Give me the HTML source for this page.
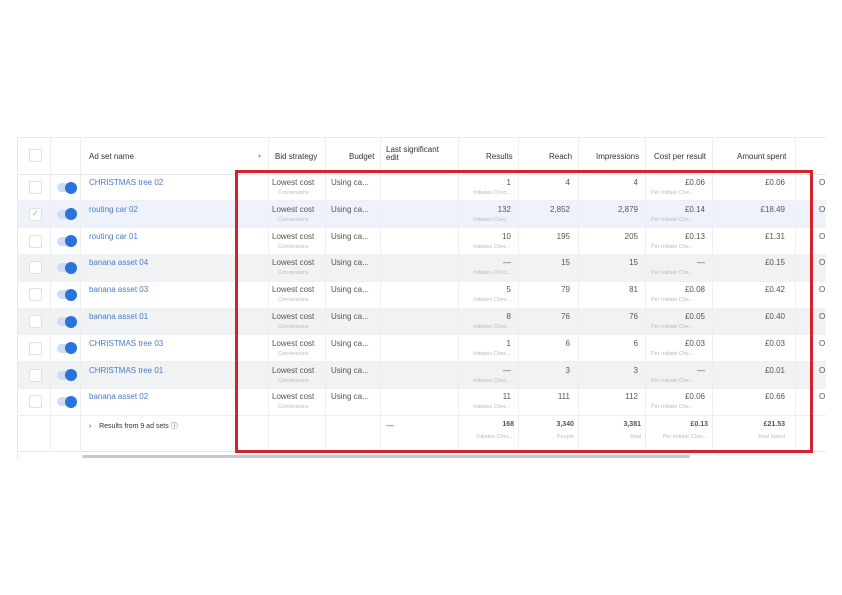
<!DOCTYPE html><html><head><style>
body{margin:0;width:842px;height:595px;background:#fff;position:relative;overflow:hidden;font-family:"Liberation Sans",sans-serif;}
.a{position:absolute;}
.c{position:absolute;font-size:8px;color:#555;white-space:nowrap;}
.s{position:absolute;font-size:5.5px;color:#bbb;white-space:nowrap;}
.r{text-align:right;}
.vl{position:absolute;top:137px;height:313px;width:1px;background:#eceef0;}
.cb{position:absolute;left:29px;width:11px;height:11px;border:1px solid #e0e0e0;border-radius:2px;background:#fff;}
.tg{position:absolute;left:57px;width:18px;height:9px;border-radius:5px;background:#cfdcf2;}
.tg i{position:absolute;right:-2px;top:-1.5px;width:12px;height:12px;border-radius:50%;background:#2a72dc;}
.nm{position:absolute;left:89px;font-size:8px;color:#4a7ac8;}
</style></head><body>
<div class="a" style="left:17px;top:137px;width:809px;height:1px;background:#e6e8eb"></div>
<div class="a" style="left:17px;top:174px;width:809px;height:1px;background:#e6e8eb"></div>
<div class="a" style="left:17px;top:137px;width:1px;height:323px;background:#e6e8eb"></div>
<div class="vl" style="left:50px"></div><div class="vl" style="left:80px"></div><div class="vl" style="left:268px"></div><div class="vl" style="left:325px"></div><div class="vl" style="left:380px"></div><div class="vl" style="left:458px"></div><div class="vl" style="left:518px"></div><div class="vl" style="left:578px"></div><div class="vl" style="left:645px"></div><div class="vl" style="left:712px"></div><div class="vl" style="left:795px"></div>
<div class="cb" style="top:149px"></div>
<div class="c" style="left:89px;top:152px;color:#333">Ad set name</div>
<div class="c" style="left:258px;top:153px;color:#999;font-size:6px">▾</div>
<div class="c" style="left:275px;top:152px;color:#333">Bid strategy</div>
<div class="c" style="left:349px;top:152px;color:#333">Budget</div>
<div class="c" style="left:386px;top:146px;color:#333;line-height:8px">Last significant<br>edit</div>
<div class="c" style="left:486px;top:152px;color:#333">Results</div>
<div class="c" style="left:549px;top:152px;color:#333">Reach</div>
<div class="c" style="left:596px;top:152px;color:#333">Impressions</div>
<div class="c" style="left:654px;top:152px;color:#333">Cost per result</div>
<div class="c" style="left:737px;top:152px;color:#333">Amount spent</div>
<div id="rows"></div>
<div class="a" style="left:17px;top:415px;width:809px;height:1px;background:#eceef0"></div>
<div class="a" style="left:17px;top:451px;width:809px;height:1px;background:#e6e8eb"></div>
<div class="c" style="left:89px;top:421px;font-size:7px;color:#333">›&nbsp;&nbsp;&nbsp; Results from 9 ad sets ⓘ</div>
<div class="c" style="left:386px;top:421px">—</div>
<div class="c r" style="left:458px;width:56px;top:421px;font-weight:bold;font-size:7px">168</div><div class="s r" style="left:458px;width:56px;top:434px">Initiates Chec...</div>
<div class="c r" style="left:518px;width:56px;top:421px;font-weight:bold;font-size:7px">3,340</div><div class="s r" style="left:518px;width:56px;top:434px">People</div>
<div class="c r" style="left:578px;width:63px;top:421px;font-weight:bold;font-size:7px">3,381</div><div class="s r" style="left:578px;width:63px;top:434px">Total</div>
<div class="c r" style="left:645px;width:63px;top:421px;font-weight:bold;font-size:7px">£0.13</div><div class="s r" style="left:645px;width:63px;top:434px">Per Initiate Chec...</div>
<div class="c r" style="left:712px;width:73px;top:421px;font-weight:bold;font-size:7px">£21.53</div><div class="s r" style="left:712px;width:73px;top:434px">Total Spent</div>
<div class="a" style="left:82px;top:455px;width:608px;height:3px;border-radius:2px;background:#c8c8c8"></div>
<div class="a" style="left:235px;top:170px;width:572px;height:277px;border:3px solid #d7212b"></div>
<script>
var d=[["CHRISTMAS tree 02","1","4","4","£0.06","£0.06",""],["routing car 02","132","2,852","2,879","£0.14","£18.49","#eef3fb"],["routing car 01","10","195","205","£0.13","£1.31",""],["banana asset 04","—","15","15","—","£0.15","#f1f2f4"],["banana asset 03","5","79","81","£0.08","£0.42",""],["banana asset 01","8","76","76","£0.05","£0.40","#f1f2f4"],["CHRISTMAS tree 03","1","6","6","£0.03","£0.03",""],["CHRISTMAS tree 01","—","3","3","—","£0.01","#f1f2f4"],["banana asset 02","11","111","112","£0.06","£0.66",""]];
var h="";d.forEach(function(r,i){var y=174+i*26.8;
if(r[6])h+='<div class="a" style="left:18px;top:'+y+'px;width:808px;height:26.8px;background:'+r[6]+';z-index:-1"></div>';
h+='<div class="a" style="left:17px;top:'+(y+26.3)+'px;width:809px;height:1px;background:#eef0f2"></div>';
h+='<div class="cb" style="top:'+(y+7)+'px">'+(i==1?'<span style="font-size:8px;color:#999;position:absolute;left:2px;top:0">✓</span>':'')+'</div>';
h+='<div class="tg" style="top:'+(y+9)+'px"><i></i></div>';
h+='<div class="nm" style="top:'+(y+4)+'px">'+r[0]+'</div>';
h+='<div class="c" style="left:272px;top:'+(y+4)+'px">Lowest cost</div><div class="s" style="left:278px;top:'+(y+16)+'px">Conversions</div>';
h+='<div class="c" style="left:331px;top:'+(y+4)+'px">Using ca...</div>';
h+='<div class="c r" style="left:458px;width:53px;top:'+(y+4)+'px">'+r[1]+'</div><div class="s r" style="left:458px;width:53px;top:'+(y+16)+'px">Initiates Chec...</div>';
h+='<div class="c r" style="left:518px;width:52px;top:'+(y+4)+'px">'+r[2]+'</div>';
h+='<div class="c r" style="left:578px;width:60px;top:'+(y+4)+'px">'+r[3]+'</div>';
h+='<div class="c r" style="left:645px;width:60px;top:'+(y+4)+'px">'+r[4]+'</div><div class="s" style="left:651px;top:'+(y+16)+'px">Per Initiate Che...</div>';
h+='<div class="c r" style="left:712px;width:73px;top:'+(y+4)+'px">'+r[5]+'</div>';
h+='<div class="c" style="left:819px;top:'+(y+4)+'px">O</div>';});
document.getElementById("rows").innerHTML=h;
</script>
</body></html>
